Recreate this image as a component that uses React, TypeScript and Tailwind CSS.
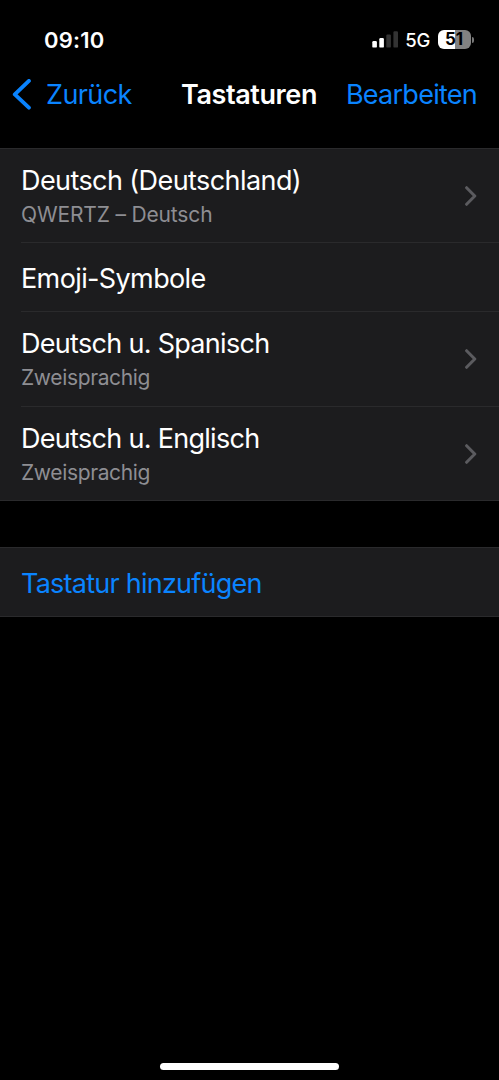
import React from "react";

type Keyboard = {
    title: string;
    subtitle?: string;
    rowClass: string;
    titleClass: string;
    subtitleClass?: string;
};

const KEYBOARDS: Keyboard[] = [
    { title: "Deutsch (Deutschland)", subtitle: "QWERTZ – Deutsch", rowClass: "h-[94px] border-b pt-[3px]", titleClass: "tracking-[-0.58px]", subtitleClass: "tracking-[-0.16px]" },
    { title: "Emoji-Symbole", rowClass: "h-[69px] border-b pt-[3px]", titleClass: "tracking-[-0.62px]" },
    { title: "Deutsch u. Spanisch", subtitle: "Zweisprachig", rowClass: "h-[95px] border-b pt-[3px]", titleClass: "tracking-[-0.7px]", subtitleClass: "tracking-[-0.36px]" },
    { title: "Deutsch u. Englisch", subtitle: "Zweisprachig", rowClass: "h-[93px] pt-[3px]", titleClass: "tracking-[-0.7px]", subtitleClass: "tracking-[-0.36px]" },
];

function StatusBar() {
    return (
        <div className="flex h-[79px] items-center justify-between pl-11 pr-[25px]">
            <span className="text-[22px] leading-7 font-semibold tracking-[0.2px]">09:10</span>
            <div className="flex items-center">
                <svg width="26" height="17" viewBox="0 0 26 17">
                    <rect x="0.3" y="10" width="4.6" height="6.6" rx="1.2" fill="#fff" />
                    <rect x="7.3" y="7" width="4.6" height="9.6" rx="1.2" fill="#fff" />
                    <rect x="14.3" y="3.5" width="4.6" height="13.1" rx="1.2" fill="#333" />
                    <rect x="21.4" y="0.2" width="4.6" height="16.4" rx="1.2" fill="#333" />
                </svg>
                <span className="mt-px ml-[7px] text-[18.5px] leading-6 font-medium tracking-[-0.3px]">5G</span>
                <div className="ml-2 flex h-[19px] w-[33px] items-center justify-center rounded-[6px] bg-linear-to-r from-white from-52% to-[#828282] to-52% pr-px text-[17px] leading-none font-bold text-black">
                    51
                </div>
                <div className="ml-px h-[6px] w-[2px] rounded-r-full bg-[#777]" />
            </div>
        </div>
    );
}

function NavBar() {
    return (
        <div className="grid h-[69px] grid-cols-[1fr_auto_1fr] items-start pl-[12px] pr-[22px] text-[27px] leading-8">
            <div className="flex items-center text-[#0a84ff]">
                <svg width="20" height="32" viewBox="0 0 20 32" fill="none" stroke="currentColor" strokeWidth="3.9" strokeLinecap="round" strokeLinejoin="round">
                    <path d="M16.9 1.9 L2.8 15.4 L16.9 28.6" />
                </svg>
                <span className="ml-[14px] tracking-[-0.6px]">Zurück</span>
            </div>
            <h1 className="pl-[9px] font-semibold tracking-[-0.4px]">Tastaturen</h1>
            <span className="text-right tracking-[-0.74px] text-[#0a84ff]">Bearbeiten</span>
        </div>
    );
}

function Chevron() {
    return (
        <svg className="-mt-[3px]" width="14" height="20" viewBox="0 0 14 20" fill="none" stroke="#5b5b5f" strokeWidth="3" strokeLinecap="round" strokeLinejoin="round">
            <path d="M3.6 1.7 L11.8 10 L3.6 18.3" />
        </svg>
    );
}

function KeyboardRow({ item }: { item: Keyboard }) {
    return (
        <li className="pl-[21px]">
            <div className={`flex items-center justify-between border-[#2a2a2c] pr-[22px] ${item.rowClass}`}>
                <div>
                    <div className={`text-[27px] leading-[34px] ${item.titleClass}`}>{item.title}</div>
                    {item.subtitle && (
                        <div className={`text-[21px] leading-[33px] text-[#8e8e93] ${item.subtitleClass}`}>{item.subtitle}</div>
                    )}
                </div>
                {item.subtitle && <Chevron />}
            </div>
        </li>
    );
}

export default function App() {
    return (
        <div className="flex h-[1080px] w-[499px] flex-col overflow-hidden bg-black font-['Inter',sans-serif] text-white">
            <StatusBar />
            <NavBar />
            <ul className="border-y border-[#2a2a2c] bg-[#1c1c1e]">
                {KEYBOARDS.map((item) => (
                    <KeyboardRow key={item.title} item={item} />
                ))}
            </ul>
            <div className="mt-[46px] flex h-[70px] items-center border-y border-[#2a2a2c] bg-[#1c1c1e] pt-[3px] pl-[21px] text-[27px] leading-8 tracking-[-0.76px] text-[#0a84ff]">
                Tastatur hinzufügen
            </div>
            <div className="mx-auto mt-auto mb-[10px] h-[7px] w-[179px] rounded-full bg-white" />
        </div>
    );
}
